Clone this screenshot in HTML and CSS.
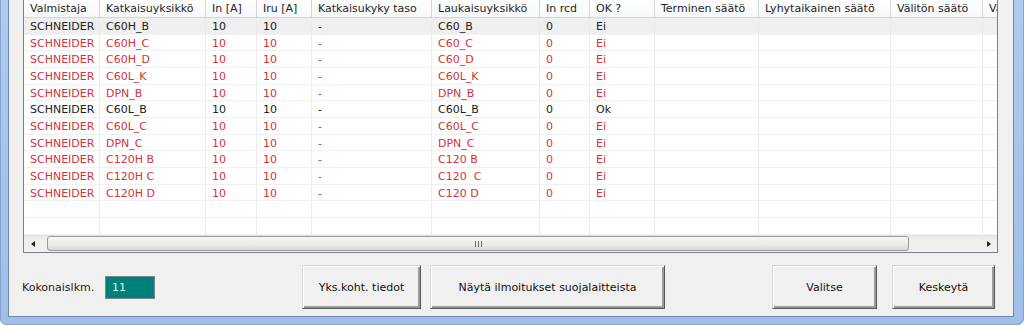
FILE: index.html
```html
<!DOCTYPE html>
<html lang="fi">
<head>
    <meta charset="UTF-8" />
    <title>Suojalaitteet</title>
    <link rel="stylesheet" href="styles.css">
</head>
<body>
<div class="window">
    <div class="client">
        <div class="listview">
            <div class="grid">
                <div class="lv-row lv-head">
                    <div class="cell">Valmistaja</div>
                    <div class="cell">Katkaisuyksikkö</div>
                    <div class="cell">In [A]</div>
                    <div class="cell">Iru [A]</div>
                    <div class="cell">Katkaisukyky taso</div>
                    <div class="cell">Laukaisuyksikkö</div>
                    <div class="cell">In rcd</div>
                    <div class="cell">OK ?</div>
                    <div class="cell">Terminen säätö</div>
                    <div class="cell">Lyhytaikainen säätö</div>
                    <div class="cell">Välitön säätö</div>
                    <div class="cell">Vä</div>
                </div>
                <div id="rows"></div>
            </div>
            <div class="hscroll">
                <div class="sb-btn sb-left"></div>
                <div class="sb-track">
                    <div class="sb-thumb"><span class="grip"></span></div>
                </div>
                <div class="sb-btn sb-right"></div>
            </div>
        </div>

        <div class="footer">
            <span class="total-label">Kokonaislkm.</span>
            <div class="count" id="count">11</div>
            <button class="btn btn-details">Yks.koht. tiedot</button>
            <button class="btn btn-notes">Näytä ilmoitukset suojalaitteista</button>
            <button class="btn btn-select">Valitse</button>
            <button class="btn btn-cancel">Keskeytä</button>
        </div>
    </div>
</div>

<script>
    // valmistaja, katkaisuyksikkö, In, Iru, taso, laukaisuyksikkö, In rcd, ok
    const devices = [
        ["SCHNEIDER", "C60H_B", 10, 10, "-", "C60_B", 0, "Ei", "ok sel"],
        ["SCHNEIDER", "C60H_C", 10, 10, "-", "C60_C", 0, "Ei", "bad"],
        ["SCHNEIDER", "C60H_D", 10, 10, "-", "C60_D", 0, "Ei", "bad"],
        ["SCHNEIDER", "C60L_K", 10, 10, "-", "C60L_K", 0, "Ei", "bad"],
        ["SCHNEIDER", "DPN_B", 10, 10, "-", "DPN_B", 0, "Ei", "bad"],
        ["SCHNEIDER", "C60L_B", 10, 10, "-", "C60L_B", 0, "Ok", "ok"],
        ["SCHNEIDER", "C60L_C", 10, 10, "-", "C60L_C", 0, "Ei", "bad"],
        ["SCHNEIDER", "DPN_C", 10, 10, "-", "DPN_C", 0, "Ei", "bad"],
        ["SCHNEIDER", "C120H B", 10, 10, "-", "C120 B", 0, "Ei", "bad"],
        ["SCHNEIDER", "C120H C", 10, 10, "-", "C120\u00a0 C", 0, "Ei", "bad"],
        ["SCHNEIDER", "C120H D", 10, 10, "-", "C120 D", 0, "Ei", "bad"]
    ];

    function buildRows() {
        const box = document.getElementById("rows");
        const all = devices.concat([null, null]);
        all.forEach(d => {
            const row = document.createElement("div");
            row.className = "lv-row" + (d ? " " + d[8] : "");
            for (let i = 0; i < 12; i++) {
                const cell = document.createElement("div");
                cell.className = "cell";
                cell.textContent = d && i < 8 ? d[i] : "";
                row.appendChild(cell);
            }
            box.appendChild(row);
        });
        document.getElementById("count").textContent = devices.length;
    }

    buildRows();
</script>
</body>
</html>
```

FILE: styles.css
```css
body {
    margin: 0;
    font-family: "DejaVu Sans", Verdana, sans-serif;
    font-size: 11px;
    color: #222;
}
.window {
    width: 1024px;
    height: 325px;
    box-sizing: border-box;
    padding: 0 10px 8px 8px;
    background: linear-gradient(#aecaef, #a0bfe8);
    border-bottom-left-radius: 7px;
    border-bottom-right-radius: 7px;
    box-shadow: inset 1px 0 #86a3cd, inset -1px -1px #86a3cd;
}
.client {
    height: 317px;
    box-sizing: border-box;
    background: #f0f0f0;
    border: 1px solid #6e86a9;
    border-top: 0;
}
.listview {
    margin-left: 14px;
    width: 975px;
    height: 253px;
    box-sizing: border-box;
    border: 1px solid #7a7f88;
    border-top: 0;
    background: #fff;
}
.grid {
    height: 235px;
    overflow: hidden;
}
.lv-row {
    display: grid;
    grid-template-columns: 76px 106px 51px 55px 120px 108px 50px 65px 104px 132px 92px 150px;
    width: 1109px;
    height: 16.667px;
    box-sizing: border-box;
    border-bottom: 1px solid #f1f1f1;
}
.cell {
    padding: 2px 6px 0;
    line-height: 14px;
    white-space: nowrap;
    overflow: hidden;
    border-right: 1px solid #ebebeb;
}
.lv-head {
    height: 18px;
    border-bottom: 1px solid #d5d5d5;
    background: linear-gradient(#ffffff, #f6f7f9);
}
.lv-head .cell {
    padding-top: 1px;
    line-height: 16px;
    border-right: 1px solid #d6d6d6;
    color: #1e1e1e;
}
.lv-row.sel {
    background: #efefef;
}
.lv-row.bad {
    color: #d0343a;
}
.hscroll {
    display: flex;
    height: 17px;
    background: linear-gradient(#e4e4e4, #efefef 30%, #f1f1f1);
}
.sb-btn {
    width: 17px;
    display: flex;
    align-items: center;
    justify-content: center;
}
.sb-left::before,
.sb-right::before {
    content: "";
    border-style: solid;
    border-color: transparent;
}
.sb-left::before {
    border-width: 3px 4px 3px 0;
    border-right-color: #222;
}
.sb-right::before {
    border-width: 3px 0 3px 4px;
    border-left-color: #222;
}
.sb-track {
    flex: 1;
    display: flex;
    align-items: center;
}
.sb-thumb {
    margin-left: 6px;
    width: 862px;
    height: 15px;
    box-sizing: border-box;
    border: 1px solid #9b9b9b;
    border-radius: 3px;
    background: linear-gradient(#f7f7f7, #ececec 50%, #d9d9d9);
    display: flex;
    align-items: center;
    justify-content: center;
}
.grip {
    width: 7px;
    height: 6px;
    background: repeating-linear-gradient(90deg, #6e6e6e 0 1px, transparent 1px 3px);
}
.footer {
    display: flex;
    align-items: center;
    height: 44px;
    padding: 12px 0 0 13px;
}
.total-label {
    width: 83px;
}
.count {
    width: 50px;
    height: 23px;
    box-sizing: border-box;
    border: 1px solid #7b8786;
    background: #00807b;
    color: #dcfbf6;
    padding-left: 6px;
    line-height: 21px;
}
.btn {
    height: 44px;
    padding: 0;
    font: inherit;
    color: #111;
    background: #f0f0f0;
    border: 1px solid;
    border-color: #d6d6d6 #555 #555 #d6d6d6;
    box-shadow: inset 1px 1px #fff, inset -2px -2px #9c9c9c;
}
.btn-details {
    margin-left: 147px;
    width: 119px;
}
.btn-notes {
    margin-left: 9px;
    width: 235px;
}
.btn-select {
    margin-left: 107px;
    width: 105px;
}
.btn-cancel {
    margin-left: 15px;
    width: 103px;
}
```
